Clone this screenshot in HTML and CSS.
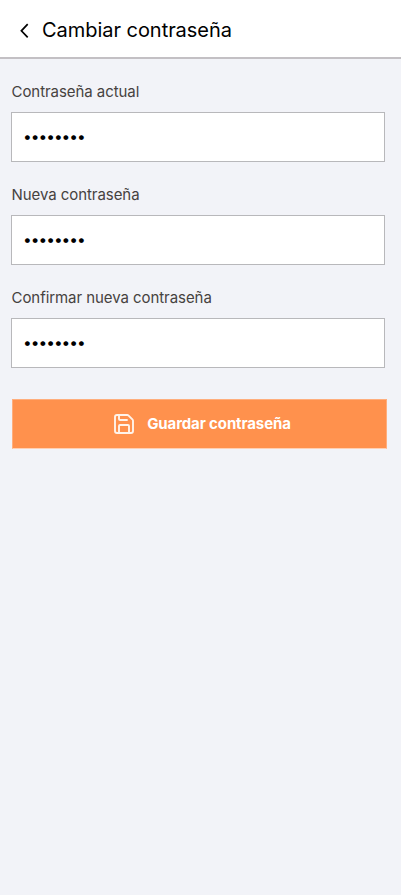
FILE: index.html
```html
<!DOCTYPE html>
<html lang="es">
<head>
<meta charset="utf-8">
<title>Cambiar contraseña</title>
<link rel="stylesheet" href="styles.css">
</head>
<body>
<header class="topbar">
  <svg class="back" width="24" height="24" viewBox="0 0 24 24" fill="none" stroke="currentColor" stroke-width="1.7"><path d="M15.7 6.2L9.4 12.8l6.3 6.5"/></svg>
  <h1 class="title">Cambiar contraseña</h1>
</header>
<main class="form">
  <div class="field">
    <div class="label">Contraseña actual</div>
    <div class="input">••••••••</div>
  </div>
  <div class="field">
    <div class="label">Nueva contraseña</div>
    <div class="input">••••••••</div>
  </div>
  <div class="field">
    <div class="label">Confirmar nueva contraseña</div>
    <div class="input">••••••••</div>
  </div>
  <button class="save">
    <svg width="24" height="24" viewBox="0 0 24 24" fill="none" stroke="#fff3ea" stroke-width="1.9" stroke-linecap="round" stroke-linejoin="round"><path d="M15.2 3a2 2 0 0 1 1.4.6l3.8 3.8a2 2 0 0 1 .6 1.4V19a2 2 0 0 1-2 2H5a2 2 0 0 1-2-2V5a2 2 0 0 1 2-2z"/><path d="M17 21v-7a1 1 0 0 0-1-1H8a1 1 0 0 0-1 1v7"/><path d="M7 3v4a1 1 0 0 0 1 1h7"/></svg>
    <span>Guardar contraseña</span>
  </button>
</main>
</body>
</html>
```
FILE: styles.css
```css
* { box-sizing: border-box; }
body { margin: 0; min-height: 895px; background: #f2f3f8; font-family: Inter, sans-serif; color: #000; }
.topbar { display: flex; align-items: center; gap: 6px; height: 59px; padding: 2px 12px 0; background: #fff; border-bottom: 2px solid #c3c0c4; }
.title { margin: 0; font-size: 20px; font-weight: 400; line-height: 24px; letter-spacing: -0.04px; }
.form { padding: 23px 14px 0 11px; }
.field { height: 103px; margin-right: 2px; }
.label { height: 30px; padding-left: 0.5px; font-size: 15px; line-height: 20px; letter-spacing: -0.06px; color: #46423f; }
.input { display: flex; align-items: center; height: 50px; padding: 0 0 2px 11px; background: #fff; border: 1px solid #b8b8bb; font-size: 15.5px; letter-spacing: -1px; }
.save { display: flex; align-items: center; justify-content: center; gap: 11px; width: 375px; height: 50px; margin: 8px 0 0 1px; padding: 0 0 1px 4px; border: 1px solid #ffae7d; border-bottom-color: #ffd0b3; background: #ff914d; color: #fff; font: 700 15px Inter, sans-serif; letter-spacing: -0.12px; }
```
